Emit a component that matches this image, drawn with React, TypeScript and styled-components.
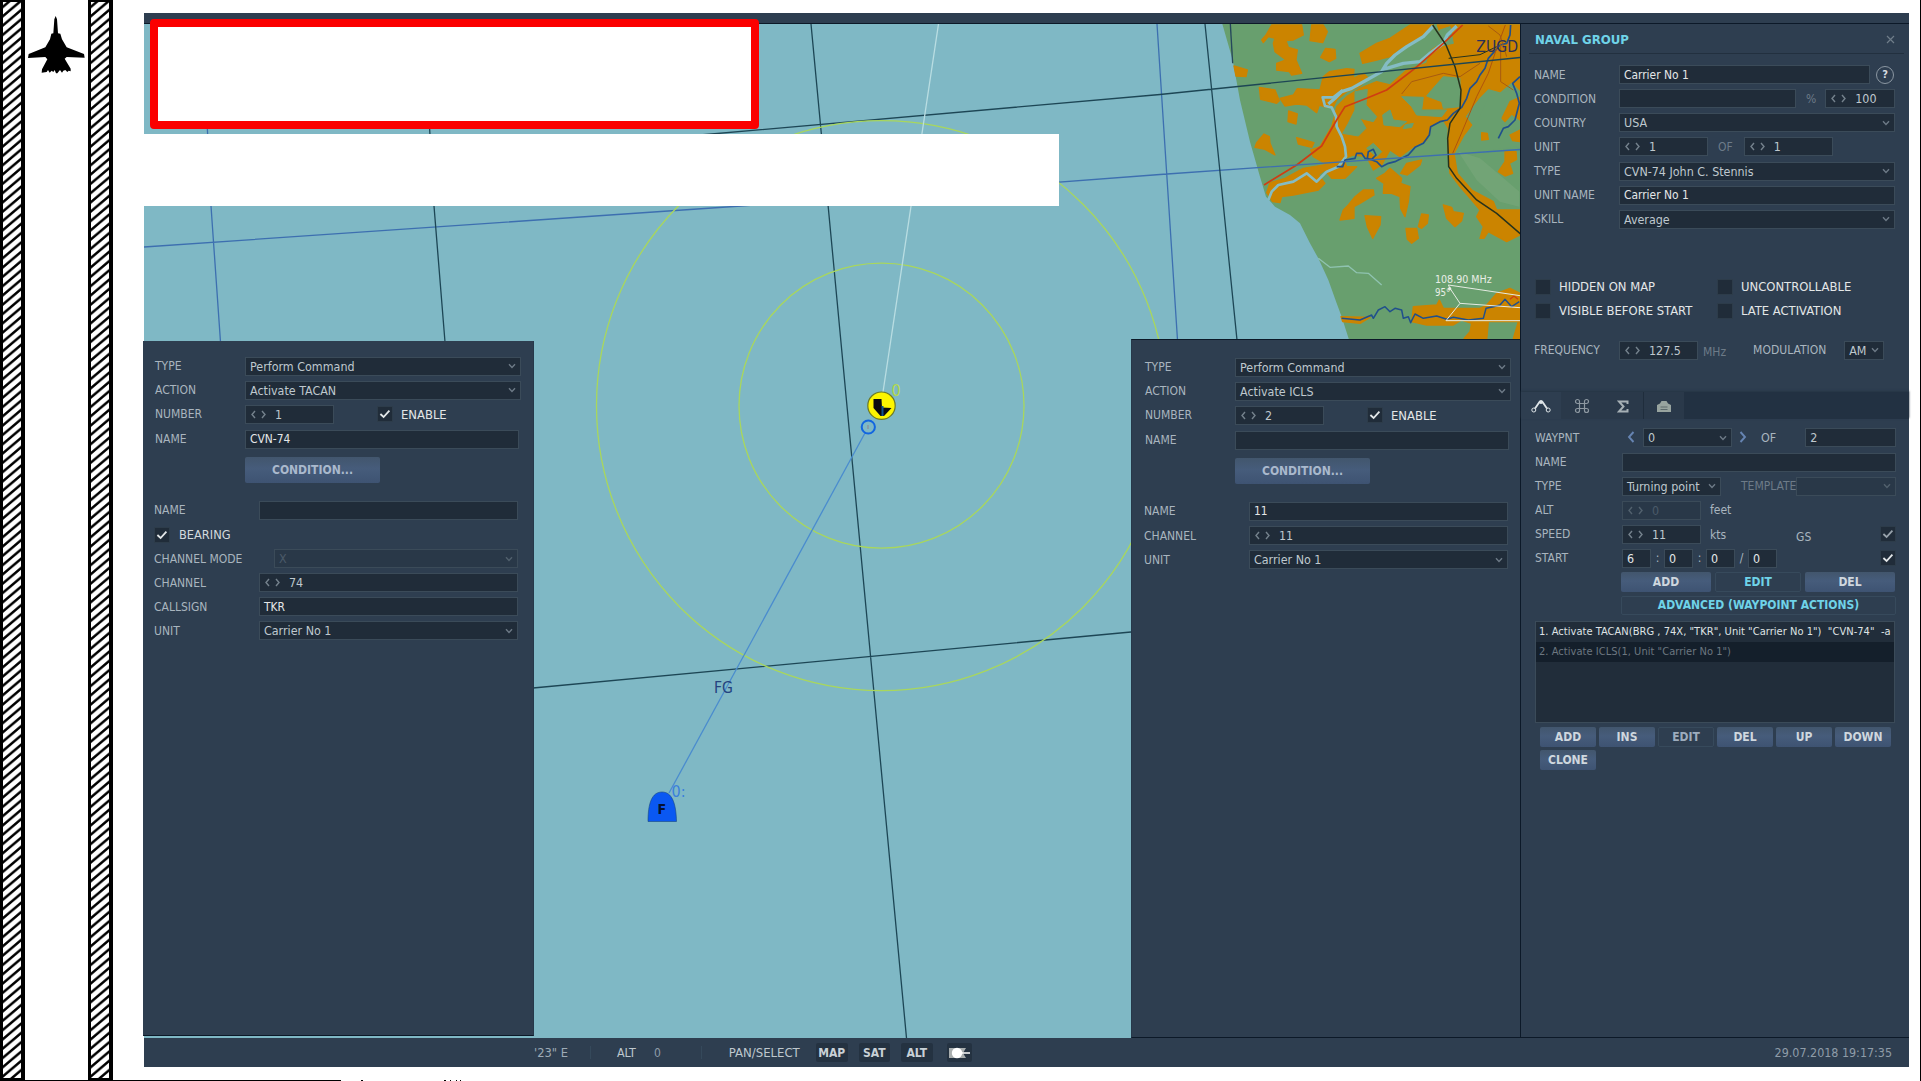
import React from "react";
import styled, { createGlobalStyle, css } from "styled-components";

const c = {
  panel: "#2e3e50",
  panelDark: "#223142",
  field: "#202c39",
  fieldLine: "#3b4b59",
  label: "#a9b5bf",
  value: "#bfc8ce",
  bright: "#e4e7e8",
  dim: "#6d7b88",
  faint: "#4b5a68",
  cyan: "#6fd3e8",
  line: "#0c1928",
  sea: "#7fb8c5",
  land: "#689f6e",
  town: "#cb8400",
};

const Global = createGlobalStyle`
  html, body { margin: 0; padding: 0; background: #fff; }
  body {
    overflow: hidden;
    font-family: "DejaVu Sans Condensed", "DejaVu Sans", sans-serif;
    font-stretch: condensed;
    font-size: 12px;
    color: ${c.label};
  }
  * { box-sizing: border-box; }
`;

const Page = styled.div`
  width: 1921px;
  height: 1081px;
  display: grid;
  grid-template-rows: 1080px 1px;
  border-right: 1px solid #000;
  background: #fff;
  overflow: hidden;
`;
const Main = styled.div`
  display: flex;
  align-items: flex-start;
`;
const Margin = styled.div`
  width: 144px;
  height: 1080px;
  display: flex;
  flex: none;
`;
const MarginGap = styled.div`
  width: 63px;
  padding: 16px 0 0 3px;
`;
const Footer = styled.div`
  display: flex;
`;
const Dash = styled.div<{ $w: number; $gap?: number }>`
  width: ${(p) => p.$w}px;
  margin-left: ${(p) => p.$gap ?? 0}px;
  background: #000;
`;

const Frame = styled.div`
  position: relative;
  margin-top: 13px;
  width: 1765px;
  height: 1054px;
  display: flex;
  flex-direction: column;
  background: ${c.panel};
`;
const TopStrip = styled.div`
  height: 11px;
  border-bottom: 1px solid ${c.line};
`;
const Work = styled.div`
  display: flex;
  height: 1014px;
`;
const MapArea = styled.div`
  position: relative;
  width: 1376px;
  display: flex;
  justify-content: space-between;
  align-items: flex-start;
`;
const MapSvg = styled.svg`
  position: absolute;
  inset: 0;
  display: block;
`;
const BlankNote = styled.div`
  position: absolute;
  left: 0;
  top: 121px;
  width: 915px;
  height: 72px;
  background: #fff;
`;
const RedNote = styled.div`
  position: absolute;
  left: 6px;
  top: 6px;
  width: 609px;
  height: 110px;
  border: 8px solid #fb0000;
  border-radius: 4px;
  background: #fff;
`;

const ActionPanel = styled.section<{ $side: "left" | "right" }>`
  position: relative;
  background: ${c.panel};
  ${(p) =>
    p.$side === "left"
      ? css`
          width: 391px;
          margin: 317px 0 0 -1px;
          height: 695px;
          padding: 13px 14px 0 12px;
          border-bottom: 1px solid ${c.line};
          border-right: 1px solid #26384a;
        `
      : css`
          width: 389px;
          margin-top: 315px;
          height: 699px;
          padding: 15px 9px 0 13px;
          border-top: 1px solid ${c.line};
          border-left: 1px solid #26384a;
          border-bottom: 1px solid ${c.line};
        `}
`;
const Params = styled.div`
  margin-left: -1px;
`;

const Row = styled.div<{ $label?: number }>`
  height: 24.1px;
  display: grid;
  grid-template-columns: ${(p) => p.$label ?? 85}px 1fr;
  align-items: center;
`;
const Cells = styled.div`
  display: flex;
  align-items: center;
  height: 19px;
`;
const Label = styled.span<{ $tone?: string; $ml?: number; $dy?: number; $size?: number; $w?: number }>`
  color: ${(p) => p.$tone ?? c.label};
  margin-left: ${(p) => p.$ml ?? 0}px;
  padding-top: ${(p) => p.$dy ?? 0}px;
  font-size: ${(p) => p.$size ?? 12}px;
  ${(p) => p.$w && `width: ${p.$w}px; flex: none; text-align: center;`}
  white-space: pre;
`;
const Field = styled.div<{ $w?: number; $ml?: number; $off?: boolean; $bright?: boolean; $gap?: number }>`
  height: 19px;
  ${(p) => (p.$w ? `width: ${p.$w}px; flex: none;` : "flex: 1;")}
  margin-left: ${(p) => p.$ml ?? 0}px;
  padding: 0 4px;
  display: flex;
  align-items: center;
  gap: ${(p) => p.$gap ?? 8}px;
  border: 1px solid ${c.fieldLine};
  background: ${(p) => (p.$off ? "#293848" : c.field)};
  color: ${(p) => (p.$off ? c.faint : p.$bright ? c.bright : c.value)};
  white-space: pre;
  svg { flex: none; }
`;
const FieldText = styled.span<{ $size?: number }>`
  flex: 1;
  font-size: ${(p) => p.$size ?? 12.4}px;
`;
const Tick = styled.span<{ $ml?: number; $end?: boolean }>`
  width: 16px;
  height: 16px;
  flex: none;
  margin-left: ${(p) => (p.$end ? "auto" : `${p.$ml ?? 0}px`)};
  display: flex;
  align-items: center;
  justify-content: center;
  background: ${c.field};
  border: 1px solid #2d3c4a;
`;
const Button = styled.button<{ $w: number; $h?: number; $flat?: boolean; $tone?: string; $ml?: number }>`
  width: ${(p) => p.$w}px;
  height: ${(p) => p.$h ?? 20}px;
  margin: 0 0 0 ${(p) => p.$ml ?? 0}px;
  padding: 0;
  border: ${(p) => (p.$flat ? "1px solid #374a5c" : "0")};
  border-radius: 2px;
  background: ${(p) => (p.$flat ? "transparent" : "linear-gradient(#42566d, #465c7b 45%, #3e5372)")};
  color: ${(p) => p.$tone ?? "#cfd7de"};
  font: bold 12px "DejaVu Sans Condensed", "DejaVu Sans", sans-serif;
  font-stretch: condensed;
`;
const Spacer = styled.div<{ $h: number }>`
  height: ${(p) => p.$h}px;
`;

const Sidebar = styled.aside`
  width: 389px;
  display: flex;
  flex-direction: column;
  border-left: 1px solid ${c.line};
  border-bottom: 1px solid ${c.line};
  background: ${c.panel};
`;
const Title = styled.header`
  height: 30px;
  margin: 0 5px 0 8px;
  padding: 1px 9px 0 6px;
  display: flex;
  align-items: center;
  justify-content: space-between;
  border-bottom: 1px solid #22303f;
  color: ${c.cyan};
  font-weight: bold;
  font-size: 13.1px;
`;
const Section = styled.div<{ $top: number; $right: number; $left?: number }>`
  padding: ${(p) => p.$top}px ${(p) => p.$right}px 0 ${(p) => p.$left ?? 13}px;
`;
const Checks = styled.div`
  display: grid;
  grid-template-columns: 182px 1fr;
  grid-auto-rows: 24.1px;
  align-items: center;
  padding-left: 1px;
`;
const CheckLabel = styled.label`
  display: flex;
  align-items: center;
  gap: 8px;
  color: ${c.bright};
  font-size: 12.9px;
  white-space: nowrap;
`;
const Help = styled.span`
  width: 18px;
  height: 18px;
  margin-left: 6px;
  border: 1px solid #8b97a2;
  border-radius: 50%;
  display: flex;
  align-items: center;
  justify-content: center;
  color: #d5dbe0;
  font-weight: bold;
  font-size: 11px;
`;
const Tabs = styled.nav`
  height: 27px;
  margin-top: 30px;
  display: flex;
  background: ${c.panelDark};
  box-shadow: 0 -1px 2px #263544;
`;
const Tab = styled.div<{ $on?: boolean; $w: number }>`
  width: ${(p) => p.$w}px;
  padding-top: 1px;
  display: flex;
  align-items: center;
  justify-content: center;
  background: ${(p) => (p.$on ? c.panel : "#2a394a")};
  & + & + & + & {
    border-left: 1px solid #1f2d3c;
  }
`;
const List = styled.div`
  width: 360px;
  height: 102px;
  margin-top: 6px;
  border: 1px solid ${c.fieldLine};
  background: #212d3a;
`;
const ListRow = styled.div<{ $sel?: boolean }>`
  height: 20px;
  padding-left: 3px;
  line-height: 20px;
  font-size: 11px;
  white-space: pre;
  letter-spacing: 0.04px;
  background: ${(p) => (p.$sel ? "#141f2b" : "transparent")};
  color: ${(p) => (p.$sel ? "#6c7780" : "#dfe3e5")};
`;
const Actions = styled.div`
  display: grid;
  grid-template-columns: repeat(6, 56px);
  gap: 3px;
  margin: 4px 0 0 5px;
`;
const Status = styled.footer`
  height: 29px;
  padding: 0 17px 0 389px;
  display: flex;
  align-items: center;
  color: #9eabb6;
`;
const Coords = styled.span`
  width: 57px;
  padding-left: 1px;
  font-size: 12.8px;
  white-space: pre;
`;
const Divider = styled.i`
  display: block;
  width: 1px;
  height: 13px;
  background: #35495b;
`;
const Chip = styled.span<{ $w: number; $ml: number }>`
  width: ${(p) => p.$w}px;
  height: 19px;
  margin-left: ${(p) => p.$ml}px;
  display: flex;
  align-items: center;
  justify-content: center;
  border-radius: 2px;
  background: #243241;
  color: #c8d0d6;
  font-weight: bold;
`;
const Push = styled.span`
  margin-left: auto;
  color: #8f9ca8;
  font-size: 12.4px;
`;

const Chevron = ({ color = "#6d7a86" }: { color?: string }) => (
  <svg width="8" height="6" viewBox="0 0 8 6">
    <path d="M1 1.2 4 4.4 7 1.2" fill="none" stroke={color} strokeWidth="1.4" />
  </svg>
);
const Arrows = ({ color = "#75828d" }: { color?: string }) => (
  <svg width="17" height="9" viewBox="0 0 17 9">
    <path d="M5 1 2 4.500 5 8M12 1l3 3.500L12 8" fill="none" stroke={color} strokeWidth="1.400" />
  </svg>
);
const Step = ({ d }: { d: string }) => (
  <svg width="8" height="12" viewBox="0 0 8 12">
    <path d={d} fill="none" stroke="#6684b2" strokeWidth="1.900" />
  </svg>
);

type BoxProps = { w?: number; ml?: number; off?: boolean; gap?: number };
const Select = ({ text = "", ...p }: BoxProps & { text?: string }) => (
  <Field $w={p.w} $ml={p.ml} $off={p.off} $gap={p.gap}>
    <FieldText>{text}</FieldText>
    <Chevron color={p.off ? "#52616e" : undefined} />
  </Field>
);
const Input = ({ text = "", ...p }: BoxProps & { text?: string }) => (
  <Field $w={p.w} $ml={p.ml} $bright>
    <FieldText $size={11.9}>{text}</FieldText>
  </Field>
);
const Spin = ({ text, ...p }: BoxProps & { text: string }) => (
  <Field $w={p.w} $ml={p.ml} $off={p.off} $gap={8}>
    <Arrows color={p.off ? "#52616e" : undefined} />
    <FieldText>{text}</FieldText>
  </Field>
);
const Check = ({ on, dim, ml, end }: { on?: boolean; dim?: boolean; ml?: number; end?: boolean }) => (
  <Tick $ml={ml} $end={end}>
    {on && (
      <svg width="12" height="10" viewBox="0 0 12 10">
        <path d="M1.400 5 4.600 8 10.400 1.600" fill="none" stroke={dim ? "#98a3ac" : "#e3e7e9"} strokeWidth="1.800" />
      </svg>
    )}
  </Tick>
);

const Hatch = ({ id, w, right }: { id: string; w: number; right: number }) => (
  <svg width={w} height="1080" viewBox={`0 0 ${w} 1080`}>
    <defs>
      <pattern id={id} width="11" height="9.300" patternUnits="userSpaceOnUse">
        <path d="M-11 18.600 22 -9.300M-11 9.300 11 -9.300M0 18.600 22 0" stroke="#000" strokeWidth="2.500" />
      </pattern>
    </defs>
    <rect width={w} height="1080" fill="#000" />
    <rect x="3" y="2" width={w - 3 - right} height="1076" fill="#fff" />
    <rect x="3" y="2" width={w - 3 - right} height="1076" fill={`url(#${id})`} />
  </svg>
);
const Jet = () => (
  <svg width="60" height="60" viewBox="0 0 180 180">
    <path
      d="M83 0 87 10 90 52 97 53 102 70 116 94 168 114 170 125 116 123 110 128 128 158 128 166 122 164 118 168 112 162 106 164 102 170 96 162 91 168 88 172 84 172 80 162 76 168 71 164 65 170 60 162 56 168 41 170 42 160 58 130 52 123 0 126 2 114 52 94 66 70 70 53 76 52 79 10Z"
      fill="#000"
    />
  </svg>
);

const towns = [
  "M335 45 425 45 430 75 400 90 378 92 385 112 412 120 408 150 425 190 395 195 388 185 350 180 350 160 378 150 345 125 340 100 345 85 325 80 310 98 305 90 318 75Z",
  "M455 45 490 45 502 65 488 98 450 92Z",
  "M497 115 525 118 527 145 508 155 482 142Z",
  "M222 168 262 180 258 200 228 198Z",
  "M298 232 345 240 358 272 350 280 302 268Z",
  "M360 265 400 255 412 236 480 240 490 200 508 185 560 176 582 178 580 205 610 190 625 205 598 230 560 245 530 270 520 290 500 292 478 285 470 308 440 285 410 282 375 288Z",
  "M600 130 650 100 690 85 735 55 750 45 820 45 790 75 760 95 720 115 690 140 650 150 608 160Z",
  "M832 45 1080 45 1080 240 1055 215 1020 245 985 235 960 260 940 285 915 320 935 345 912 375 882 430 892 490 935 540 1000 575 1010 600 1080 600 1080 675 1040 695 985 665 972 685 960 685 970 650 950 620 960 600 935 570 900 530 870 490 865 420 865 355 850 330 815 345 800 390 760 410 720 440 690 420 665 465 640 480 620 440 580 435 545 450 495 460 460 440 452 420 480 410 515 350 525 315 530 290 560 260 600 235 650 215 690 225 740 180 800 160 815 120 850 95Z",
  "M386 303 412 312 408 342 384 335Z",
  "M312 372 328 380 330 400 345 435 315 418 285 412 290 398Z",
  "M410 383 462 398 455 412 415 402Z",
  "M320 548 330 518 375 505 430 475 520 460 550 440 560 470 590 470 555 505 515 505 495 480 475 495 495 520 475 540 400 555 365 560 360 578 338 575Z",
  "M585 560 610 540 640 540 642 555 600 580 582 590 582 625 540 630 550 600 565 585Z",
  "M615 617 662 620 660 645 638 685 622 650Z",
  "M650 505 675 490 690 475 725 505 722 520 750 530 745 575 735 620 722 595 720 560 695 550 670 550 672 520Z",
  "M722 490 740 460 785 450 780 465 742 495Z",
  "M785 612 805 615 802 640 785 655 775 650Z",
  "M738 655 770 655 775 685 755 700 742 688Z",
  "M850 585 875 592 880 605 910 610 905 632 885 650 860 625Z",
  "M760 890 830 885 838 870 850 895 960 895 980 885 1010 850 1050 835 1080 850 1080 990 1060 985 1075 935 985 935 980 990 912 985 930 965 935 940 905 930 880 945 800 945 755 935Z",
  "M543 920 630 922 600 940 548 935Z",
];
const clearings = [
  "M585 245 622 238 618 285 650 320 640 335 600 325 618 355 595 378 548 370 565 340 585 300Z",
  "M668 315 690 300 700 330 740 335 720 350 672 345Z",
  "M725 260 790 262 785 300 860 300 845 320 770 315 755 290 740 275Z",
  "M850 200 900 205 900 290 850 295 845 275 800 258 815 240Z",
  "M985 262 1050 240 1060 300 1030 330 1040 370 1080 350 1080 410 1000 420 950 440 935 410 920 390 950 340Z",
  "M620 415 640 400 665 425 650 440Z",
  "M840 60 870 50 880 100 830 110Z",
  "M735 345 760 340 755 352 730 356Z",
];
const easternTowns = [
  "M965 368 982 370 985 388 965 390Z",
  "M1035 425 1068 425 1070 448 1048 460 1058 490 1035 498 1015 485 1025 470 1035 455Z",
  "M1050 275 1080 262 1080 330 1055 312 1035 335 1026 325Z",
  "M1050 375 1080 360 1080 395 1058 392Z",
];

const MapLayer = () => (
  <MapSvg width="1376" height="1014" viewBox="144 24 1376 1014">
    <rect x="144" y="24" width="1376" height="1014" fill={c.sea} />
    <g transform="translate(1160 10) scale(.33333)">
      <path d="M187 42 218 150 240 270 270 395 300 500 318 560 345 590 390 615 420 640 450 700 475 745 505 810 530 880 545 920 568 992 1082 992 1082 42Z" fill={c.land} />
      <path d="M895 425 960 445 1078 545 1078 590 1020 575 950 510Z" fill="#79a97b" opacity=".6" />
      {towns.map((d) => (
        <path key={d} d={d} fill={c.town} stroke={c.town} strokeWidth="4" strokeLinejoin="round" />
      ))}
      {clearings.map((d) => (
        <path key={d} d={d} fill={c.land} stroke={c.land} strokeWidth="3" strokeLinejoin="round" />
      ))}
      {easternTowns.map((d) => (
        <path key={d} d={d} fill={c.town} stroke={c.town} strokeWidth="4" strokeLinejoin="round" />
      ))}
      <g fill="none" strokeLinejoin="round">
        <path d="M820 48 790 80 740 110 705 135 680 160 665 185 620 210 575 235 545 245 525 265 505 282M890 48 862 75 850 100 810 130 780 155 730 160 670 178" stroke="#84bcc4" strokeWidth="10" />
        <path d="M548 240 520 262 488 262 495 288 515 292 528 320 530 350 545 380 555 410 558 440 535 470 500 485 470 515 440 490 400 515 355 525 335 545 325 570" stroke="#84bcc4" strokeWidth="8" />
        <path d="M475 745 510 772 565 768 590 788 625 790 665 825" stroke="#8fc3b0" strokeWidth="4" />
        <path d="M530 470 548 470 555 450 585 445 590 430 605 430 615 445 635 448 648 435 640 418 625 425 622 445 650 455 665 470 685 460 705 455 725 445 745 435 765 412 790 400 808 375 812 350 840 335 862 330 880 310 905 292 920 265 930 235 950 215 960 195 975 175 985 145 1003 125 1020 105 1040 100 1050 75 1052 45" stroke="#20508c" strokeWidth="5" />
        <path d="M1080 200 1058 220 1070 250 1078 280 1065 330 1045 350 1030 355 1015 385" stroke="#20508c" strokeWidth="5" />
        <path d="M545 925 600 930 635 915 640 925 655 900 675 890 690 905 705 895 725 900 730 925 745 920 752 938 765 912 790 925 830 918 860 928 880 922 925 930 970 925 978 895 1000 890 1020 885 1035 868 1055 890 1078 875" stroke="#20508c" strokeWidth="4.500" />
        <path d="M908 45 850 100 765 175 680 240 620 265 555 290 530 330 485 408 410 465 312 525" stroke="#cf3d12" strokeWidth="5" />
        <path d="M1036 45 1010 115 985 190 950 260 925 320 900 380 878 430" stroke="#b0520c" strokeWidth="3" />
        <path d="M985 48 1020 75 1040 140 M1022 100 1022 215 1060 240M725 252 755 215 850 190 900 200 960 160" stroke="#a85a10" strokeWidth="3" />
        <path d="M1050 868 1062 858 1074 868" stroke="#cf3d12" strokeWidth="4" />
        <path d="M818 45 858 105 885 170 903 240 900 295 870 340 863 385 866 470 890 505 950 570 1010 610 1082 672" stroke="#26321c" strokeWidth="4.500" />
        <path d="M866 145 960 134 1010 110" stroke="#26321c" strokeWidth="3" />
        <path d="M211 42 218 160" stroke="#25475c" strokeWidth="4" />
        <path d="M1080 857 865 825 870 835 900 880 1080 893M900 880 858 932 1080 932" stroke="#e6ebe3" strokeWidth="3" />
        <circle cx="869" cy="836" r="5" fill="#e6ebe3" />
      </g>
      <text x="949" y="125" fontSize="46" textLength="125" lengthAdjust="spacingAndGlyphs" fill="#2a2f58">ZUGD</text>
      <text x="825" y="818" fontSize="29" textLength="170" lengthAdjust="spacingAndGlyphs" fill="#e9eee6">108.90 MHz</text>
      <text x="825" y="858" fontSize="29" fill="#e9eee6">95°</text>
    </g>
    <g fill="none" strokeWidth="1.300">
      <g stroke="#3d6fb0">
        <path d="M144 247 741 206 1160 174.500 1520 149.500M206 100 211 206 220.500 342M1157 24 1177.500 340" />
      </g>
      <g stroke="#1d4655">
        <path d="M811 24 906.500 1038M700 135 1160 94.500 1520 57.500M428 100 434 206 445 342M1205 24 1237 340M533 688 1131 632" />
      </g>
      <g stroke="#a9d75c">
        <circle cx="881.500" cy="405.700" r="142.500" />
        <circle cx="881.500" cy="405.700" r="285" />
      </g>
      <path d="M938.500 24 883 392" stroke="#b9dde2" />
      <path d="M865 433 669 793" stroke="#4a8cce" />
      <circle cx="868.300" cy="427" r="6.600" stroke="#1266e0" strokeWidth="2" />
      <path d="M868 425v4" stroke="#8a8f9c" />
    </g>
    <circle cx="881.500" cy="405.700" r="13.700" fill="#fdf500" stroke="#6d7a26" strokeWidth="1.200" />
    <path d="M873.500 399h8l.5 8.500 9.500 .5-7.500 8h-3.500l-7-8z" fill="#0b0b10" />
    <path d="M882.500 406v10" stroke="#12518e" strokeWidth="2" />
    <text x="891.500" y="395.500" fontSize="16" fill="#b4d94c">0</text>
    <text x="714" y="693" fontSize="16.500" textLength="19" lengthAdjust="spacingAndGlyphs" fill="#24437f">FG</text>
    <text x="671.500" y="796.500" fontSize="16" fill="#3a80dc">0:</text>
    <path d="M648 821.500C648 803 652 792 662 792s14 11 14.500 29.500z" fill="#0a58f2" stroke="#17477f" strokeWidth=".6" />
    <text x="657.500" y="813.500" fontSize="14" fontWeight="bold" fill="#041233">F</text>
  </MapSvg>
);

const CommandHead = ({ action, number, name }: { action: string; number: string; name: string }) => (
  <>
    <Row $label={90}><Label>TYPE</Label><Cells><Select text="Perform Command" w={276} /></Cells></Row>
    <Row $label={90}><Label>ACTION</Label><Cells><Select text={action} w={276} /></Cells></Row>
    <Row $label={90}>
      <Label>NUMBER</Label>
      <Cells>
        <Spin text={number} w={89} />
        <Check on ml={43} />
        <Label $ml={8} $tone={c.bright} $size={12.9}>ENABLE</Label>
      </Cells>
    </Row>
    <Spacer $h={1} />
    <Row $label={90}><Label>NAME</Label><Cells><Input text={name} w={274} /></Cells></Row>
    <Spacer $h={6} />
    <Button $w={135} $h={26} $ml={90} $tone="#aab9cd">CONDITION...</Button>
    <Spacer $h={15} />
  </>
);

const TimeField = ({ v }: { v: string }) => (
  <Field $w={29} $bright>
    <FieldText>{v}</FieldText>
  </Field>
);

export default function App() {
  return (
    <Page>
      <Global />
      <Main>
        <Margin>
          <Hatch id="hatchA" w={25} right={4} />
          <MarginGap><Jet /></MarginGap>
          <Hatch id="hatchB" w={25} right={4} />
        </Margin>
        <Frame>
          <TopStrip />
          <Work>
            <MapArea>
              <MapLayer />
              <ActionPanel $side="left">
                <CommandHead action="Activate TACAN" number="1" name="CVN-74" />
                <Params>
                  <Row $label={105}><Label>NAME</Label><Cells><Input w={259} /></Cells></Row>
                  <Row $label={17}><Check on /><Label $ml={8} $tone="#d3dade" $size={12.7}>BEARING</Label></Row>
                  <Row $label={120}><Label>CHANNEL MODE</Label><Cells><Select text="X" w={244} off /></Cells></Row>
                  <Row $label={105}><Label>CHANNEL</Label><Cells><Spin text="74" w={259} /></Cells></Row>
                  <Row $label={105}><Label>CALLSIGN</Label><Cells><Input text="TKR" w={259} /></Cells></Row>
                  <Row $label={105}><Label>UNIT</Label><Cells><Select text="Carrier No 1" w={259} /></Cells></Row>
                </Params>
              </ActionPanel>
              <ActionPanel $side="right">
                <CommandHead action="Activate ICLS" number="2" name="" />
                <Params>
                  <Row $label={105}><Label>NAME</Label><Cells><Input text="11" w={259} /></Cells></Row>
                  <Row $label={105}><Label>CHANNEL</Label><Cells><Spin text="11" w={259} /></Cells></Row>
                  <Row $label={105}><Label>UNIT</Label><Cells><Select text="Carrier No 1" w={259} /></Cells></Row>
                </Params>
              </ActionPanel>
            </MapArea>
            <Sidebar>
              <Title>
                NAVAL GROUP
                <svg width="9" height="9" viewBox="0 0 9 9"><path d="M1 1l7 7M8 1 1 8" stroke="#6f7d89" strokeWidth="1.200" /></svg>
              </Title>
              <Section $top={8.6} $right={14}>
                <Row><Label>NAME</Label><Cells><Input text="Carrier No 1" w={251} /><Help>?</Help></Cells></Row>
                <Row><Label>CONDITION</Label><Cells><Input w={177} /><Label $ml={10} $tone={c.dim}>%</Label><Spin text="100" w={70} ml={9} /></Cells></Row>
                <Row><Label>COUNTRY</Label><Cells><Select text="USA" /></Cells></Row>
                <Row><Label>UNIT</Label><Cells><Spin text="1" w={89} /><Label $ml={10} $tone={c.dim}>OF</Label><Spin text="1" w={89} ml={11} /></Cells></Row>
                <Row><Label>TYPE</Label><Cells><Select text="CVN-74 John C. Stennis" /></Cells></Row>
                <Row><Label>UNIT NAME</Label><Cells><Input text="Carrier No 1" /></Cells></Row>
                <Row><Label>SKILL</Label><Cells><Select text="Average" /></Cells></Row>
                <Spacer $h={43.4} />
                <Checks>
                  <CheckLabel><Check />HIDDEN ON MAP</CheckLabel>
                  <CheckLabel><Check />UNCONTROLLABLE</CheckLabel>
                  <CheckLabel><Check />VISIBLE BEFORE START</CheckLabel>
                  <CheckLabel><Check />LATE ACTIVATION</CheckLabel>
                </Checks>
                <Spacer $h={15.5} />
                <Row>
                  <Label>FREQUENCY</Label>
                  <Cells>
                    <Spin text="127.5" w={79} />
                    <Label $ml={5} $dy={4} $tone={c.dim}>MHz</Label>
                    <Label $ml={27}>MODULATION</Label>
                    <Select text="AM" w={40} ml={18} gap={4} />
                  </Cells>
                </Row>
              </Section>
              <Tabs>
                <Tab $on $w={40}>
                  <svg width="20" height="14" viewBox="0 0 20 14">
                    <path d="M3 11 8.500 3h3L17 11" fill="none" stroke="#dfe5e8" strokeWidth="1.800" />
                    <circle cx="10" cy="3" r="2" fill="#dfe5e8" />
                    <circle cx="2.800" cy="11" r="2" fill={c.panel} stroke="#dfe5e8" />
                    <circle cx="17.200" cy="11" r="2" fill={c.panel} stroke="#dfe5e8" />
                  </svg>
                </Tab>
                <Tab $w={41}>
                  <svg width="16" height="16" viewBox="0 0 16 16" fill="none" stroke="#8d98a1" strokeWidth="1.200">
                    <path d="M5.500 5.500h5v5h-5zM5.500 5.500H3.500a2 2 0 1 1 2-2zM10.500 5.500v-2a2 2 0 1 1 2 2zM10.500 10.500h2a2 2 0 1 1-2 2zM5.500 10.500v2a2 2 0 1 1-2-2z" />
                  </svg>
                </Tab>
                <Tab $w={41}>
                  <svg width="12" height="13" viewBox="0 0 12 13">
                    <path d="M10.500 4V1.500H2L6.500 6.500 2 11.500h8.500V9" fill="none" stroke="#a6b0b5" strokeWidth="2" />
                  </svg>
                </Tab>
                <Tab $w={41}>
                  <svg width="16" height="13" viewBox="0 0 16 13">
                    <path d="M1 5 4 3.500 5.500 1h5L12 3.500 15 5V12H1z" fill="#98a49f" />
                    <path d="M4.500 7h7M4.500 9.500h7" stroke="#5c6a6c" strokeWidth="1.100" />
                  </svg>
                </Tab>
              </Tabs>
              <Section $top={6.5} $right={13} $left={14}>
                <Row $label={87}>
                  <Label>WAYPNT</Label>
                  <Cells>
                    <Label $ml={5} $dy={2}><Step d="M6.500 1 2 6l4.500 5" /></Label>
                    <Select text="0" w={89} ml={8} />
                    <Label $ml={7} $dy={2}><Step d="M1.500 1 6 6l-4.500 5" /></Label>
                    <Label $ml={14} $size={12.4}>OF</Label>
                    <Field $w={91} $ml={29}><FieldText>2</FieldText></Field>
                  </Cells>
                </Row>
                <Row $label={87}><Label>NAME</Label><Cells><Input /></Cells></Row>
                <Row $label={87}>
                  <Label>TYPE</Label>
                  <Cells><Select text="Turning point" w={99} gap={4} /><Label $ml={20} $tone={c.dim}>TEMPLATE</Label><Select off /></Cells>
                </Row>
                <Row $label={87}><Label>ALT</Label><Cells><Spin text="0" w={79} off /><Label $ml={9}>feet</Label></Cells></Row>
                <Row $label={87}>
                  <Label>SPEED</Label>
                  <Cells><Spin text="11" w={79} /><Label $ml={9} $dy={2}>kts</Label><Label $ml={70} $dy={5}>GS</Label><Check on dim end /></Cells>
                </Row>
                <Row $label={87}>
                  <Label>START</Label>
                  <Cells>
                    <TimeField v="6" /><Label $w={13}>:</Label>
                    <TimeField v="0" /><Label $w={13}>:</Label>
                    <TimeField v="0" /><Label $w={13}>/</Label>
                    <TimeField v="0" />
                    <Check on end />
                  </Cells>
                </Row>
                <Spacer $h={2.5} />
                <Cells>
                  <Button $w={90} $ml={86}>ADD</Button>
                  <Button $w={86} $ml={4} $flat $tone={c.cyan}>EDIT</Button>
                  <Button $w={90} $ml={4}>DEL</Button>
                </Cells>
                <Spacer $h={4} />
                <Button $w={275} $h={19} $ml={86} $flat $tone={c.cyan}>ADVANCED (WAYPOINT ACTIONS)</Button>
                <List>
                  <ListRow>{'1. Activate TACAN(BRG , 74X, "TKR", Unit "Carrier No 1")  "CVN-74"  -a'}</ListRow>
                  <ListRow $sel>{'2. Activate ICLS(1, Unit "Carrier No 1")'}</ListRow>
                </List>
                <Actions>
                  <Button $w={56}>ADD</Button>
                  <Button $w={56}>INS</Button>
                  <Button $w={56} $flat $tone="#9dacbd">EDIT</Button>
                  <Button $w={56}>DEL</Button>
                  <Button $w={56}>UP</Button>
                  <Button $w={56}>DOWN</Button>
                  <Button $w={56}>CLONE</Button>
                </Actions>
              </Section>
            </Sidebar>
          </Work>
          <Status>
            <Coords>{"'23\" E"}</Coords>
            <Divider />
            <Label $ml={26} $tone={c.value} $size={12.4}>ALT</Label>
            <Label $ml={18} $tone="#8f9ca8">0</Label>
            <Label $ml={40}><Divider /></Label>
            <Label $ml={27} $tone={c.value} $size={13}>PAN/SELECT</Label>
            <Chip $w={32} $ml={16}>MAP</Chip>
            <Chip $w={31} $ml={11}>SAT</Chip>
            <Chip $w={32} $ml={11}>ALT</Chip>
            <Chip $w={25} $ml={14}>
              <svg width="23" height="14" viewBox="0 0 23 14">
                <path d="M1 2H18L15 7 18 12H1Z" fill="#a8adae" />
                <circle cx="9" cy="7" r="5.200" fill="#fff" />
                <path d="M8 7h14" stroke="#fff" strokeWidth="1.500" />
              </svg>
            </Chip>
            <Push>29.07.2018 19:17:35</Push>
          </Status>
          <BlankNote />
          <RedNote />
        </Frame>
      </Main>
      <Footer>
        <Dash $w={341} />
        <Dash $w={2} $gap={20} />
        <Dash $w={2} $gap={81} />
        <Dash $w={1} $gap={4} />
        <Dash $w={1} $gap={5} />
        <Dash $w={1} $gap={3} />
      </Footer>
    </Page>
  );
}
